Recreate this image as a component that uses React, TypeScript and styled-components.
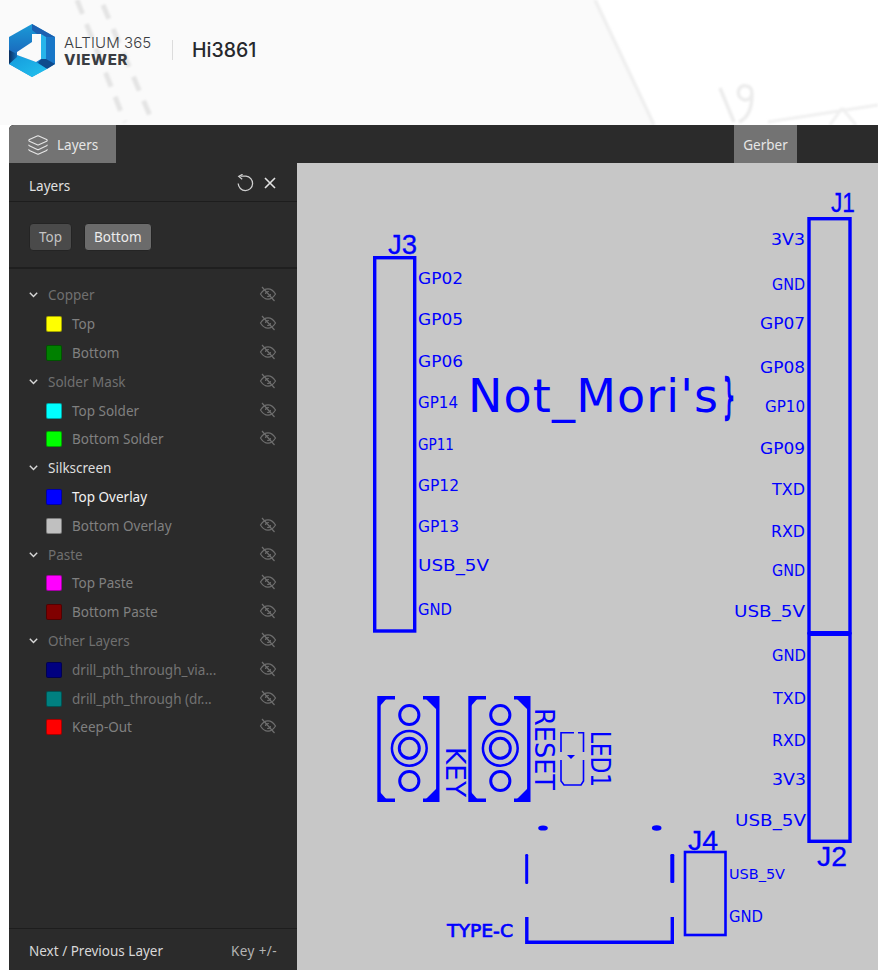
import React from "react";
import styled, { createGlobalStyle } from "styled-components";
import { Layers as LayersIcon } from "lucide-react";

const Global = createGlobalStyle`
  html, body { margin: 0; padding: 0; background: #fff; }
  body { font-family: "Noto Sans", "Open Sans", sans-serif; overflow: hidden; }
  * { box-sizing: border-box; }
`;

const Page = styled.div`
  position: relative;
  width: 878px;
  height: 970px;
  overflow: hidden;
  display: flex;
  flex-direction: column;
`;

const Backdrop = styled.svg`
  position: absolute;
  top: 0;
  left: 0;
  width: 878px;
  height: 125px;
`;

const Header = styled.header`
  position: relative;
  height: 125px;
  flex: none;
  display: flex;
  align-items: flex-start;
  padding: 24px 0 0 9px;
`;

const Brand = styled.div`
  width: 108px;
  flex: none;
  display: flex;
  flex-direction: column;
  margin-left: 9px;
  padding-top: 11px;
  font-family: Inter, "Noto Sans", sans-serif;
  color: #3a3d42;
`;

const BrandTop = styled.span`
  font-size: 15px;
  line-height: 16.5px;
  font-weight: 300;
  letter-spacing: 0.1px;
`;

const BrandBottom = styled.span`
  font-size: 15px;
  line-height: 16.5px;
  font-weight: 800;
  letter-spacing: 0.7px;
`;

const Divider = styled.div`
  width: 1px;
  height: 20px;
  background: #dcdcdc;
  margin: 16px 19px 0 0;
`;

const Project = styled.h1`
  margin: 14px 0 0;
  font-family: Inter, sans-serif;
  font-size: 19.5px;
  line-height: 24px;
  font-weight: 500;
  color: #26282c;
`;

const Panel = styled.div`
  position: relative;
  flex: 1;
  min-height: 0;
  margin-left: 9px;
  display: flex;
  flex-direction: column;
  background: #2b2b2b;
  border-top-left-radius: 5px;
  overflow: hidden;
`;

const TabBar = styled.div`
  height: 38px;
  flex: none;
  display: flex;
  background: #2b2b2b;
`;

const Tab = styled.div`
  display: flex;
  align-items: center;
  height: 38px;
  padding-top: 2px;
  background: #737373;
  color: #e6e6e6;
  font-size: 13.5px;
`;

const LayersTab = styled(Tab)`
  width: 107px;
  padding-left: 18px;
  gap: 8px;
`;

const GerberTab = styled(Tab)`
  width: 63px;
  justify-content: center;
  margin-left: auto;
  margin-right: 81px;
`;

const Body = styled.div`
  flex: 1;
  min-height: 0;
  display: flex;
`;

const Sidebar = styled.aside`
  width: 288px;
  flex: none;
  display: flex;
  flex-direction: column;
  background: #2b2b2b;
  color: #ddd;
  font-size: 13.5px;
`;

const TitleRow = styled.div`
  height: 39px;
  flex: none;
  display: flex;
  align-items: center;
  padding: 0 20px;
  border-bottom: 1px solid #1d1d1d;
`;

const Title = styled.span`
  flex: 1;
  color: #e0e0e0;
  padding-top: 7px;
`;

const IconSlot = styled.span`
  display: flex;
  color: #d0d0d0;
  margin-top: 1px;
`;

const IconGap = styled(IconSlot)`
  margin-left: 9px;
`;

const SideTabs = styled.div`
  height: 67px;
  flex: none;
  display: flex;
  align-items: flex-start;
  gap: 12px;
  padding: 21px 20px 0;
  border-bottom: 2px solid #1f1f1f;
`;

const SideButton = styled.button<{ $active?: boolean }>`
  height: 28px;
  padding: 0 9px;
  border: 1px solid #242424;
  border-radius: 4px;
  background: ${(p) => (p.$active ? "#6b6b6b" : "#4a4a4a")};
  color: ${(p) => (p.$active ? "#ececec" : "#c4c4c4")};
  font: inherit;
`;

const List = styled.div`
  flex: 1;
  min-height: 0;
  padding-top: 12px;
`;

const Row = styled.div`
  height: 28.8px;
  display: flex;
  align-items: center;
  padding-right: 20px;
`;

const GroupRow = styled(Row)`
  padding-left: 20px;
`;

const LayerRow = styled(Row)`
  padding-left: 37px;
`;

const Chevron = styled.svg`
  width: 9px;
  height: 6px;
  margin-right: 10px;
  flex: none;
`;

const Swatch = styled.span<{ $color: string }>`
  width: 16px;
  height: 16px;
  flex: none;
  margin-right: 10px;
  border-radius: 2px;
  border: 1px solid rgba(0, 0, 0, 0.35);
  background: ${(p) => p.$color};
`;

const GroupLabel = styled.span<{ $on?: boolean }>`
  flex: 1;
  color: ${(p) => (p.$on ? "#dedede" : "#707070")};
`;

const LayerLabel = styled.span<{ $on?: boolean; $dim?: boolean }>`
  white-space: nowrap;
  color: ${(p) => (p.$on ? "#f2f2f2" : p.$dim ? "#737373" : "#808080")};
`;

const EyeWrap = styled.svg`
  width: 18px;
  height: 16px;
  flex: none;
  margin-left: auto;
  margin-top: -2px;
`;

const Footer = styled.div`
  height: 42px;
  flex: none;
  display: flex;
  align-items: center;
  justify-content: space-between;
  padding: 3px 20px 0;
  border-top: 1px solid #1d1d1d;
  color: #d8d8d8;
`;

const FooterKey = styled.span`
  color: #b4b4b4;
  letter-spacing: 0.4px;
`;

const Canvas = styled.svg`
  flex: 1;
  min-width: 0;
  height: 807px;
  background: #c7c7c7;
  display: block;
`;

const Silk = styled.text<{ $heavy?: number }>`
  font-family: "DejaVu Sans", sans-serif;
  fill: #0000ff;
  stroke: #0000ff;
  stroke-width: ${(p) => p.$heavy ?? 0};
`;

const RefLabel = styled(Silk)`
  font-family: "Liberation Sans", sans-serif;
`;

const Outline = styled.g`
  fill: none;
  stroke: #0000ff;
`;

const Solid = styled.g`
  fill: #0000ff;
`;

const Eye = () => (
  <EyeWrap viewBox="0 0 18 16" fill="none" stroke="#6e6e6e" strokeWidth="1.2">
    <path d="M1.5 8 C4 4 7 2.8 9 2.8 C11 2.8 14 4 16.5 8 C14 12 11 13.2 9 13.2 C7 13.2 4 12 1.5 8 Z" />
    <path d="M6.6 8 A2.5 2.5 0 0 1 9.8 5.6 M11.4 8 A2.5 2.5 0 0 1 8.2 10.4" />
    <path d="M3 1 L15.5 15" />
  </EyeWrap>
);

const Chev = () => (
  <Chevron viewBox="0 0 9 6" fill="none" stroke="#d8d8d8" strokeWidth="1.4">
    <path d="M0.8 0.8 L4.5 4.6 L8.2 0.8" />
  </Chevron>
);

const groups: {
  name: string;
  on?: boolean;
  layers: { name: string; color: string; on?: boolean; dim?: boolean }[];
}[] = [
  { name: "Copper", layers: [{ name: "Top", color: "#ffff00" }, { name: "Bottom", color: "#008000" }] },
  { name: "Solder Mask", layers: [{ name: "Top Solder", color: "#00ffff" }, { name: "Bottom Solder", color: "#00ff00" }] },
  { name: "Silkscreen", on: true, layers: [{ name: "Top Overlay", color: "#0000ff", on: true }, { name: "Bottom Overlay", color: "#c0c0c0" }] },
  { name: "Paste", layers: [{ name: "Top Paste", color: "#ff00ff" }, { name: "Bottom Paste", color: "#800000" }] },
  {
    name: "Other Layers",
    layers: [
      { name: "drill_pth_through_via...", color: "#000080", dim: true },
      { name: "drill_pth_through (dr...", color: "#008080", dim: true },
      { name: "Keep-Out", color: "#ff0000" },
    ],
  },
];

/* [label, x, baseline, width, font size] */
const startPins: [string, number, number, number, number][] = [
  ["GP02", 418, 284, 45, 16.5],
  ["GP05", 418, 325, 45, 16.5],
  ["GP06", 418, 367, 45, 16.5],
  ["GP14", 418, 408, 40, 15.5],
  ["GP11", 418, 450, 36, 16],
  ["GP12", 418, 491, 41, 16],
  ["GP13", 418, 532, 41, 16],
  ["USB_5V", 418, 571, 71, 16.5],
  ["GND", 418, 615, 34, 16.5],
  ["USB_5V", 729, 879, 56, 14],
  ["GND", 729, 922, 34, 16.5],
];

const endPins: [string, number, number, number, number][] = [
  ["3V3", 771, 245, 34, 16.5],
  ["GND", 772, 290, 33, 16.5],
  ["GP07", 760, 329, 45, 16.5],
  ["GP08", 760, 373, 45, 16.5],
  ["GP10", 765, 412, 40, 16.5],
  ["GP09", 760, 454, 45, 16.5],
  ["TXD", 772, 495, 33, 16.5],
  ["RXD", 771, 537, 34, 16.5],
  ["GND", 772, 576, 33, 16.5],
  ["USB_5V", 734, 617, 71, 16.5],
  ["GND", 772, 661, 34, 16.5],
  ["TXD", 773, 704, 33, 16.5],
  ["RXD", 772, 746, 34, 16.5],
  ["3V3", 772, 785, 34, 16.5],
  ["USB_5V", 735, 826, 71, 16.5],
];

const refs: [string, number, number, number][] = [
  ["J1", 831, 212, 24],
  ["J3", 388, 254, 29],
  ["J2", 817, 866, 30],
  ["J4", 688, 850, 30],
];

const vertical: [string, number, number, number][] = [
  ["KEY", 446, 747, 50],
  ["RESET", 535, 708, 82],
  ["LED1", 591, 731, 56],
];

const Switch = ({ dx }: { dx: number }) => (
  <g transform={`translate(${dx} 0)`}>
    <Outline strokeWidth="3.4">
      <path d="M395 697.8 H379 V800.2 H395" />
      <path d="M423 697.8 H437.8 V800.2 H423" />
    </Outline>
    <Solid>
      <path d="M379 697 H388 L380 706 H379 Z" />
      <path d="M379 801 H388 L380 792 H379 Z" />
      <path d="M425 698 H438 V711 Z" />
      <path d="M425 800 H438 V787 Z" />
    </Solid>
    <Outline strokeWidth="3">
      <circle cx="409.3" cy="715" r="9.6" />
      <circle cx="409.3" cy="781" r="9.6" />
      <circle cx="409.3" cy="748.3" r="10" />
    </Outline>
    <Outline strokeWidth="2.5">
      <circle cx="409.3" cy="748.3" r="17.4" />
    </Outline>
  </g>
);

const Logo = () => (
  <svg width="46" height="53" viewBox="9 24 46 53">
    <defs>
      <linearGradient id="lgA" x1="0" y1="0" x2="0" y2="1">
        <stop offset="0" stopColor="#1a9bd8" />
        <stop offset="0.5" stopColor="#1a6fc0" />
        <stop offset="1" stopColor="#1c8fd6" />
      </linearGradient>
      <linearGradient id="lgB" x1="0" y1="0" x2="1" y2="0">
        <stop offset="0" stopColor="#0b2f5e" />
        <stop offset="1" stopColor="#1470bd" />
      </linearGradient>
      <linearGradient id="lgC" x1="0" y1="0" x2="1" y2="1">
        <stop offset="0" stopColor="#1599dc" />
        <stop offset="1" stopColor="#22c2ee" />
      </linearGradient>
    </defs>
    <path d="M32 24 L55 37 V64 L32 77 L9 64 V37 Z" fill="url(#lgA)" />
    <path d="M32 24 L55 37 L46 41 L32 30 Z" fill="#1c5fb0" />
    <path d="M46 37 L55 37 V64 L46 59 Z" fill="#1877c8" />
    <path d="M41 34 L46 37 V59 H41 Z" fill="#27b4ea" />
    <path d="M41 59 H46 L55 64 L47 69 L38 63 Z" fill="#0e4a8c" />
    <path d="M17 55 L36 62 L47 69 L32 77 L9 64 Z" fill="url(#lgC)" />
    <path d="M9 50 L17 54 V57 L9 64 Z" fill="url(#lgB)" />
    <path d="M32 34 H41 V59 L36 62 L17 55 V52 L32 42 Z" fill="#fafafa" />
  </svg>
);

export default function App() {
  return (
    <Page>
      <Global />
      <Backdrop viewBox="0 0 878 125">
        <defs>
          <filter id="soft">
            <feGaussianBlur stdDeviation="1.3" />
          </filter>
        </defs>
        <path d="M0 0 H595 L654 125 H0 Z" fill="#fafafa" />
        <g filter="url(#soft)" fill="none" stroke="#e4e4e4">
          <path d="M77 0 L125 122" strokeWidth="5" strokeDasharray="15 11" />
          <path d="M103 5 L153 123" strokeWidth="5" strokeDasharray="15 11" />
          <path d="M595 0 L654 125" strokeWidth="3.5" stroke="#efefef" />
          <path d="M720 88 L734 122 M746 86 C737 84 735 98 745 100 C754 100 754 86 746 86 M752 94 C752 108 748 118 739 122" strokeWidth="3.5" stroke="#ececec" />
          <path d="M768 122 L878 105" strokeWidth="3" stroke="#f0f0f0" />
          <path d="M842 108 L856 125 M842 108 L830 125" strokeWidth="3" stroke="#f0f0f0" />
        </g>
      </Backdrop>
      <Header>
        <Logo />
        <Brand>
          <BrandTop>ALTIUM 365</BrandTop>
          <BrandBottom>VIEWER</BrandBottom>
        </Brand>
        <Divider />
        <Project>Hi3861</Project>
      </Header>
      <Panel>
        <TabBar>
          <LayersTab>
            <LayersIcon size={22} strokeWidth={1.2} color="#e6e6e6" />
            Layers
          </LayersTab>
          <GerberTab>Gerber</GerberTab>
        </TabBar>
        <Body>
          <Sidebar>
            <TitleRow>
              <Title>Layers</Title>
              <IconSlot>
                <svg width="18" height="18" viewBox="0 0 18 18" fill="none" stroke="#cfcfcf" strokeWidth="1.3">
                  <path d="M4.5 2.2 H10 A7.2 7.2 0 1 1 2.2 9.6" />
                  <path d="M6.6 0.3 L2.8 2.4 L6.2 5.2" />
                </svg>
              </IconSlot>
              <IconGap>
                <svg width="14" height="14" viewBox="0 0 14 14" fill="none" stroke="#e2e2e2" strokeWidth="1.6">
                  <path d="M2 2 L12 12 M12 2 L2 12" />
                </svg>
              </IconGap>
            </TitleRow>
            <SideTabs>
              <SideButton>Top</SideButton>
              <SideButton $active>Bottom</SideButton>
            </SideTabs>
            <List>
              {groups.map((g) => (
                <React.Fragment key={g.name}>
                  <GroupRow>
                    <Chev />
                    <GroupLabel $on={g.on}>{g.name}</GroupLabel>
                    {!g.on && <Eye />}
                  </GroupRow>
                  {g.layers.map((l) => (
                    <LayerRow key={l.name}>
                      <Swatch $color={l.color} />
                      <LayerLabel $on={l.on} $dim={l.dim}>
                        {l.name}
                      </LayerLabel>
                      {!l.on && <Eye />}
                    </LayerRow>
                  ))}
                </React.Fragment>
              ))}
            </List>
            <Footer>
              <span>Next / Previous Layer</span>
              <FooterKey>Key +/-</FooterKey>
            </Footer>
          </Sidebar>
          <Canvas viewBox="297 163 581 807">
            <Outline strokeWidth="3.4">
              <rect x="374.7" y="257.7" width="40" height="373.3" />
              <rect x="809" y="218.7" width="41" height="414" />
              <rect x="809" y="634" width="41" height="207.3" />
            </Outline>
            <Outline strokeWidth="2.6">
              <rect x="685" y="852" width="40.5" height="83" />
            </Outline>
            <Solid>
              <rect x="808" y="631" width="43" height="5" />
            </Solid>
            {startPins.map(([t, x, y, w, s], i) => (
              <Silk key={`s${i}`} x={x} y={y} fontSize={s} textLength={w} lengthAdjust="spacingAndGlyphs">
                {t}
              </Silk>
            ))}
            {endPins.map(([t, x, y, w, s], i) => (
              <Silk key={`e${i}`} x={x} y={y} fontSize={s} textLength={w} lengthAdjust="spacingAndGlyphs">
                {t}
              </Silk>
            ))}
            {refs.map(([t, x, y, w]) => (
              <RefLabel key={t} x={x} y={y} fontSize={28} textLength={w} lengthAdjust="spacingAndGlyphs" $heavy={0.3}>
                {t}
              </RefLabel>
            ))}
            <Silk x={468} y={412} fontSize={46} textLength={250} lengthAdjust="spacing">
              Not_Mori's
            </Silk>
            <Silk x={723} y={412} fontSize={46} textLength={12} lengthAdjust="spacingAndGlyphs" $heavy={2.4}>
              {"}"}
            </Silk>
            <Silk x={447} y={937} fontSize={17.5} textLength={66} lengthAdjust="spacingAndGlyphs" $heavy={0.7}>
              TYPE-C
            </Silk>
            {vertical.map(([t, x, y, w]) => (
              <Silk
                key={t}
                transform={`translate(${x} ${y}) rotate(90)`}
                fontSize={26}
                textLength={w}
                lengthAdjust="spacingAndGlyphs"
              >
                {t}
              </Silk>
            ))}
            <Switch dx={0} />
            <Switch dx={91} />
            <Outline strokeWidth="1.6">
              <path d="M561 752 V732.8 H574 M578 732.8 H583.5 V752" />
              <path d="M561 760 V781 L564 785 H581 L583.5 781 V760" />
            </Outline>
            <Solid>
              <path d="M567 755 H575 L571 759 Z" />
              <ellipse cx="543" cy="828" rx="4.8" ry="2.6" />
              <ellipse cx="656.7" cy="828" rx="4.8" ry="2.8" />
              <rect x="525.2" y="854" width="3" height="30" rx="1.2" />
              <rect x="670.3" y="854" width="4" height="29" rx="1.2" />
            </Solid>
            <Outline strokeWidth="3.4">
              <path d="M526.8 917 V942.3 H672.3 V917" />
            </Outline>
          </Canvas>
        </Body>
      </Panel>
    </Page>
  );
}
